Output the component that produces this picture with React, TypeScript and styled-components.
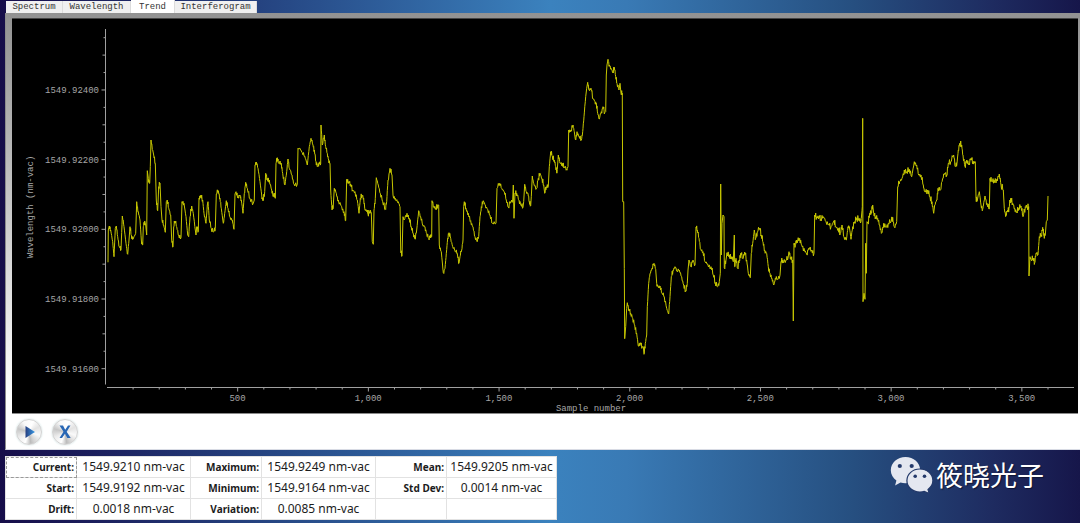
import React, { useState } from 'react';
import styled, { createGlobalStyle } from 'styled-components';

const Global = createGlobalStyle`
  * { box-sizing: border-box; }
  html, body, #root { height: 100%; }
  body { margin: 0; background: #17174b; }
`;

const ui = `'Noto Sans', 'Open Sans', sans-serif`;
const mono = `'Liberation Mono', monospace`;

const Page = styled.main`
  min-height: 100%;
  padding-left: 5px;
  display: flex;
  flex-direction: column;
  background: linear-gradient(90deg, #160d49 0%, #1b1d5b 8%, #274a87 27%, #3b82be 51%, #397ab5 58%, #264f80 79%, #1e2b60 92%, #16164a 100%);
`;

const Tabs = styled.div`
  display: flex;
  align-items: flex-end;
  height: 13px;
  padding-left: 1px;
`;

const Tab = styled.button<{ $active: boolean; $width: number }>`
  width: ${p => p.$width}px;
  height: ${p => (p.$active ? 13 : 12)}px;
  padding: 0;
  border: 0;
  border-right: 1px solid #dcdcdc;
  background: ${p => (p.$active ? '#fff' : '#f0f0f0')};
  color: #333;
  font: 9px/12px ${mono};
  white-space: nowrap;
`;

const Panel = styled.section`
  padding: 5px 2px 0 6px;
  border-left: 1px solid #8c8c8c;
  border-bottom: 1px solid #d8dbe4;
  background: linear-gradient(180deg, #929292 0%, #a2a2a2 14%, #fff 88%);
`;

const Chart = styled.svg`
  display: block;
  width: 100%;
  height: auto;
  border-top: 1px solid #444;
  background: #000;
  box-shadow: inset 0 -1px #8a8a8a;
`;

const AxisText = styled.text`
  font: 9px ${mono};
  fill: #a6a6a6;
`;

const Controls = styled.div`
  display: flex;
  align-items: center;
  gap: 10px;
  height: 35px;
  margin: 0 -2px 0 -6px;
  padding-left: 10px;
  background: #fff;
`;

const RoundButton = styled.button`
  width: 26px;
  height: 26px;
  padding: 0;
  border: 1px solid #d2d2d2;
  border-radius: 50%;
  background: conic-gradient(from 20deg, #fff, #e2e2e2 12%, #fafafa 24%, #d2d2d2 37%, #bcbcbc 42%, #fff 50%, #ececec 62%, #c6c6c6 74%, #f8f8f8 86%, #fff);
  box-shadow: 0 0 2px #c8dede;
  svg { display: block; width: 24px; height: 24px; }
`;

const Footer = styled.footer`
  display: flex;
  justify-content: space-between;
  align-items: flex-start;
  padding-top: 6px;
`;

const Stats = styled.table`
  width: 552px;
  table-layout: fixed;
  border-collapse: collapse;
  border: 1px solid #9fa6b4;
  background: #fff;
  color: #1c1c1c;
  font-family: ${ui};
`;

const LabelCell = styled.th<{ $focused?: boolean }>`
  width: 71px;
  height: 21px;
  padding: 0 2px 0 0;
  border: 1px solid #e2e2e2;
  ${p => p.$focused && 'outline: 1px dashed #999; outline-offset: -1px;'}
  text-align: right;
  font-size: 10px;
  line-height: 18px;
  font-weight: 700;
`;

const ValueCell = styled.td`
  width: 114px;
  padding: 0;
  border: 1px solid #e2e2e2;
  text-align: center;
  font-size: 12px;
  line-height: 18px;
  white-space: nowrap;
  &:last-child { width: auto; }
`;

const Brand = styled.div`
  display: flex;
  align-items: center;
  gap: 3px;
  height: 38px;
  padding-right: 36px;
  color: #fff;
  font: 27px/38px 'Noto Sans CJK SC', sans-serif;
  text-shadow: 1px 1px 1px #101535;
  svg { display: block; width: 43px; height: 38px; }
`;

/* Trace samples, grouped by stretch: origin in chart units, then x,y offsets in thirds of a unit. */
const stretches: { x: number; y: number; d: string }[] = [
  { x: 100, y: 120, d: '24,427 25,330 28,318 32,330 38,365 42,410 46,325 49,318 53,350 58,380 63,390 67,288 72,320 78,370 83,403 87,360 90,320 94,345 99,358 102,350 105,345 107,340 110,245 115,275 120,300 124,360 128,375 130,320 134,303 137,315 140,345 142,152 145,175 149,190 151,140 153,60 158,90 161,105 166,130 169,240 173,272 176,200 180,190 183,260 186,300 191,315 196,337 199,245 202,240 206,265 212,285 215,360 219,380 221,320 225,303 230,320 236,345 243,353 246,245 252,250 258,290 263,345 266,350 270,290 275,258 280,280 286,330 288,345 290,320 295,335 297,235 302,226 308,240 312,280 318,310 322,255 324,245 328,300 334,325 341,335 346,325 349,222 355,212 360,235 364,265 370,310 374,280 379,242 384,265 390,290 397,300 402,328 405,222 408,215 414,230 420,225 424,240 429,280 433,220 437,187 442,205 450,235 460,250 463,240 465,135 469,126 474,145 480,185 485,225 489,243 494,215 497,160 502,175 508,180 515,210 520,230' },
  { x: 270, y: 110, d: '12,250 16,265 18,160 22,143 26,160 34,160 38,190 45,225 50,185 54,147 58,175 66,195 72,222 82,222 84,115 90,115 97,128 104,138 112,165 118,110 123,85 129,105 133,120 138,155 142,170 147,158 152,162 153,45 157,105 163,75 167,110 172,130 176,150 180,160 182,240 186,300 190,285 193,235 199,250 205,270 215,290 222,305 227,332 230,208 236,215 242,222 248,240 255,245 262,270 267,310 271,265 276,255 281,265 285,300 290,300 294,312 299,305 304,308 307,395 310,403 312,300 316,265 319,203 325,225 331,250 338,275 346,297 350,275 354,210 360,175 366,195 369,255 376,265 385,275 390,290 392,420 396,438 399,320 402,330 411,310 418,325 424,350 430,370 435,388 440,360 446,302 452,320 458,345 465,350 470,370 476,385 481,375 485,380 486,272 491,290 498,293 503,285 506,285 508,405 514,425 520,488 525,475 529,430 533,385 537,368 542,385 548,410 556,425 562,430 567,460' },
  { x: 440, y: 50, d: '60,620 65,600 69,570 71,470 73,455 78,475 85,490 92,512 99,530 105,560 111,575 116,560 120,500 124,470 130,452 136,465 143,478 150,495 157,520 168,520 171,415 179,400 185,415 193,425 199,450 205,470 212,455 218,450 220,405 222,505 225,430 230,430 237,450 243,465 249,472 251,455 254,403 259,425 264,430 268,455 272,467 274,440 277,378 281,400 290,415 295,385 300,370 306,385 311,405 314,430 319,410 325,408 328,350 332,305 337,318 343,330 347,350 351,370 355,315 360,340 367,340 373,350 380,358 384,350 386,240 393,240 399,225 403,245 406,268 411,245 417,258 424,270 428,245 432,200 437,140 440,115 443,97 447,120 453,115 459,145 465,155 469,160 473,190 478,207 484,185 489,170 494,188 497,185 499,75 501,45 504,28 508,45 513,55 519,65 523,52 527,80 531,100 537,120 540,100 543,130 547,130 548,455' },
  { x: 600, y: 180, d: '71,65 73,265 74,476 77,440 80,385 82,368 87,390 92,400 98,415 104,435 110,460 115,498 121,488 127,500 130,500 132,523 136,490 140,465 142,380 146,310 150,280 156,265 162,250 167,268 170,310 174,320 180,318 186,340 193,350 200,385 206,402 210,350 214,290 219,270 225,260 231,272 238,270 245,290 251,315 257,332 262,310 264,270 267,240 272,258 279,240 285,255 288,142 292,150 297,175 302,208 309,215 315,245 323,252 333,260 340,285 346,308 352,320 358,305 361,280 362,12 364,225 366,130 369,105 372,110 373,263 378,240 381,218 388,225 394,230 400,245 403,165 404,260 408,235 413,265 418,240 422,220 428,235 434,216 440,240 445,280 451,293 454,220 458,190 463,150 467,175 472,155 479,145 484,165 489,185 494,210 500,220 505,260 510,280 516,295 521,315 526,295 532,298 540,285 543,245 548,240 558,240 564,235 567,215 572,232 578,240 580,423' },
  { x: 780, y: 110, d: '42,400 46,405 50,390 59,385 65,405 72,415 80,432 86,415 95,420 102,430 104,315 110,320 118,318 122,328 130,320 138,335 146,342 153,350 162,332 167,350 175,355 181,370 186,345 192,380 199,390 204,350 208,350 213,388 218,350 224,335 230,325 237,325 243,335 247,290 248,25 249,575 252,550 255,568 257,400 259,490 261,335 264,340 269,310 274,305 278,285 281,310 287,320 293,325 299,345 306,368 311,340 318,352 325,340 333,335 338,322 343,350 350,335 353,230 359,215 366,205 373,180 380,185 388,178 395,200 403,155 410,165 416,195 423,195 430,225 434,245 443,240 450,260 456,275 461,310 464,285 470,270 474,235 481,240 488,205 494,190 500,195 505,160 512,155 521,135 526,170 531,160 535,120 539,100 545,105 549,135 555,170 560,150 567,160 573,145 579,155 584,155' },
  { x: 930, y: 120, d: '136,125 138,235 142,240 148,215 153,255 158,268 165,228 171,250 178,267 180,175 186,185 192,180 200,178 208,162 213,195 220,210 223,265 228,288 233,270 237,265 242,235 248,250 254,265 260,275 266,265 273,258 279,290 286,260 292,262 296,260 297,468 300,410 304,420 310,415 314,428 318,400 324,405 328,350 334,345 338,322 342,345 346,345 349,305 352,300 354,228' },
];

const samples = stretches.flatMap(s =>
  s.d.split(' ').map(p => {
    const [x, y] = p.split(',').map(Number);
    return [s.x + x / 3, s.y + y / 3];
  }),
);

/* Fine measurement noise between neighbouring samples, stronger on the right half. */
const trace = samples
  .flatMap(([x, y], i) => {
    const next = samples[i + 1];
    if (!next || next[0] - x < 1.2) return [[x, y]];
    const steep = Math.abs(next[1] - y) > 12;
    const amp = steep ? 1 : x > 700 ? 5 : 4;
    return [0, 1, 2, 3].map(k => {
      const t = k / 4;
      const r = Math.abs(Math.sin(i * 12.9 + k * 78.2) * 43758.5) % 1;
      const n = k === 0 ? 0 : (k % 2 ? 1 : -1) * r * amp * 0.7;
      return [x + (next[0] - x) * t, y + (next[1] - y) * t + n];
    });
  })
  .map(([x, y]) => `${x.toFixed(1)},${y.toFixed(1)}`)
  .join(' ');

const yLabels = ['1549.92400', '1549.92200', '1549.92000', '1549.91800', '1549.91600'];
const xLabels = ['500', '1,000', '1,500', '2,000', '2,500', '3,000', '3,500'];
const yTicks = Array.from({ length: 20 }, (_, i) => ({ y: 37.7 + i * 17.42, len: i % 4 === 3 ? 4 : i % 2 ? 3 : 2 }));
const xTicks = Array.from({ length: 36 }, (_, i) => ({ x: 133.1 + i * 26.14, len: i % 5 === 4 ? 4 : 2 }));

function TrendChart() {
  return (
    <Chart viewBox="12 19 1066 395" role="img" aria-label="Wavelength trend">
      <g stroke="#a0a0a0" strokeWidth="1" fill="none">
        <path d="M105.5 29V384.5M107 387.5H1074" />
        {yTicks.map(t => <path key={t.y} d={`M105.5 ${t.y}h${-t.len}`} />)}
        {xTicks.map(t => <path key={t.x} d={`M${t.x} 387.5v${t.len}`} />)}
      </g>
      {yLabels.map((l, i) => <AxisText key={l} x={99} y={93 + i * 69.67} textAnchor="end">{l}</AxisText>)}
      {xLabels.map((l, i) => <AxisText key={l} x={237.5 + i * 130.7} y={401} textAnchor="middle">{l}</AxisText>)}
      <AxisText x={591} y={411} textAnchor="middle">Sample number</AxisText>
      <AxisText transform="translate(33 207) rotate(-90)" textAnchor="middle">Wavelength (nm-vac)</AxisText>
      <polyline points={trace} fill="none" stroke="#c8c800" strokeWidth="1" strokeLinejoin="round" />
    </Chart>
  );
}

const tabs = [
  { name: 'Spectrum', width: 57 },
  { name: 'Wavelength', width: 68 },
  { name: 'Trend', width: 44 },
  { name: 'Interferogram', width: 82 },
];

const rows = [
  [['Current:', '1549.9210 nm-vac'], ['Maximum:', '1549.9249 nm-vac'], ['Mean:', '1549.9205 nm-vac']],
  [['Start:', '1549.9192 nm-vac'], ['Minimum:', '1549.9164 nm-vac'], ['Std Dev:', '0.0014 nm-vac']],
  [['Drift:', '0.0018 nm-vac'], ['Variation:', '0.0085 nm-vac'], ['', '']],
];

export default function App() {
  const [active, setActive] = useState('Trend');
  return (
    <>
      <Global />
      <Page>
        <Tabs role="tablist">
          {tabs.map(t => (
            <Tab key={t.name} role="tab" aria-selected={active === t.name} $active={active === t.name} $width={t.width} onClick={() => setActive(t.name)}>
              {t.name}
            </Tab>
          ))}
        </Tabs>
        <Panel>
          <TrendChart />
          <Controls>
            <RoundButton aria-label="Start">
              <svg viewBox="0 0 24 24">
                <defs>
                  <linearGradient id="blue" x1="0" x2="1">
                    <stop offset="0" stopColor="#263f80" />
                    <stop offset="1" stopColor="#3b9be6" />
                  </linearGradient>
                </defs>
                <path d="M8.5 6V18L18 12Z" fill="url(#blue)" />
              </svg>
            </RoundButton>
            <RoundButton aria-label="Clear">
              <svg viewBox="0 0 24 24">
                <path d="M6.5 5.500H10L12.2 9.7L15 5.500H17.5L13.7 11.7L17.7 18H14.3L12 13.8L9 18H6.5L10.5 11.8Z" fill="#2866b4" />
              </svg>
            </RoundButton>
          </Controls>
        </Panel>
        <Footer>
          <Stats>
            <tbody>
              {rows.map((row, r) => (
                <tr key={r}>
                  {row.map(([label, value], c) => (
                    <React.Fragment key={c}>
                      <LabelCell scope="row" $focused={r === 0 && c === 0}>{label}</LabelCell>
                      <ValueCell>{value}</ValueCell>
                    </React.Fragment>
                  ))}
                </tr>
              ))}
            </tbody>
          </Stats>
          <Brand>
            <svg viewBox="890 454 43 38" aria-hidden="true">
              <path d="M905.5 455C897.5 455 890.8 460.800 890.8 468.300C890.8 472.500 893 476.200 896.400 478.600L895.100 483.500L900.500 480.600C902.100 481.100 903.700 481.300 905.500 481.300C913.600 481.300 920.200 475.600 920.200 468.300C920.200 460.800 913.600 455 905.500 455Z" fill="#e4e7f0" />
              <path d="M919.800 467C912.700 467 906.900 472 906.900 478.600C906.900 485.200 912.700 490.100 919.800 490.100C921.400 490.100 922.900 489.900 924.300 489.400L929.200 491.500L928 487.400C931 485.300 932.900 482.200 932.900 478.600C932.900 472 927 467 919.800 467Z" fill="#e4e7f0" stroke="#23396a" strokeWidth="1.200" />
              <g fill="#23396a">
                <circle cx="899.800" cy="464" r="2.100" />
                <circle cx="911.700" cy="464" r="2.100" />
                <circle cx="915.200" cy="474.300" r="1.800" />
                <circle cx="924.500" cy="474.300" r="1.800" />
              </g>
            </svg>
            筱晓光子
          </Brand>
        </Footer>
      </Page>
    </>
  );
}
